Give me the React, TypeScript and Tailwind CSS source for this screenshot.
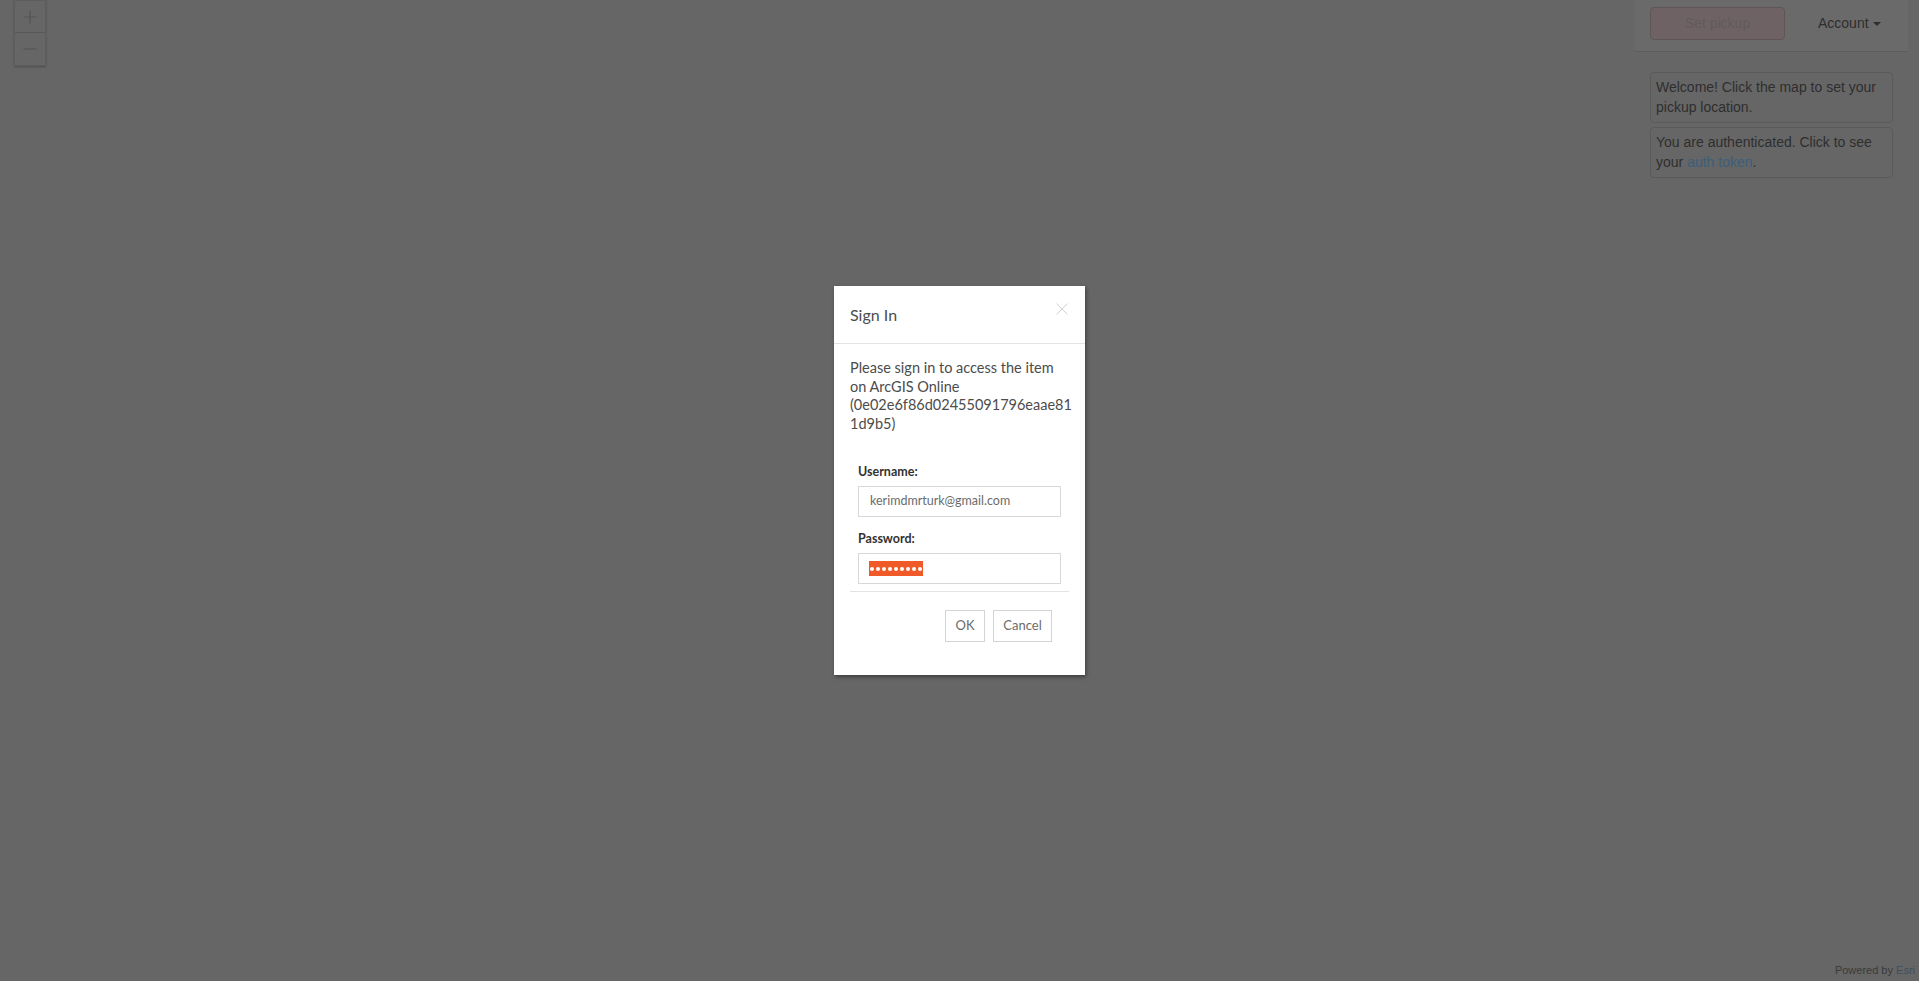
import React from "react";

function ZoomControls() {
  return (
    <div className="absolute left-[14px] top-0 flex w-[32px] flex-col border border-[#5d5d5d] bg-[#666666] shadow-[0_1px_2px_rgba(0,0,0,0.25)]">
      <div className="flex h-[32px] items-center justify-center border-b border-[#595959]">
        <svg width="14" height="14" viewBox="0 0 14 14">
          <path d="M7 0.5v13M0.5 7h13" stroke="#545454" strokeWidth="1.2" />
        </svg>
      </div>
      <div className="flex h-[32px] items-center justify-center">
        <svg width="14" height="14" viewBox="0 0 14 14">
          <path d="M0.5 7h13" stroke="#545454" strokeWidth="1.2" />
        </svg>
      </div>
    </div>
  );
}

function TopPanel() {
  return (
    <div className="absolute right-[11px] top-0 w-[273px] font-['Liberation_Sans',Arial,sans-serif] text-[14px]">
      <div className="flex h-[52px] items-start border-b border-[#5d5d5d] bg-[#6a6a6a] pl-[15px] pt-[7px]">
        <div className="flex h-[33px] w-[135px] items-center justify-center rounded-[4px] border border-[#5e5657] bg-[#6e6264] text-[#625b5c]">
          Set pickup
        </div>
        <div className="ml-[33px] flex h-[33px] items-center text-[#2e2e2e]">
          Account
          <svg className="ml-[4px]" width="8" height="4" viewBox="0 0 8 4">
            <path d="M0 0h8L4 4z" fill="#2e2e2e" />
          </svg>
        </div>
      </div>
      <div className="flex flex-col gap-[4px] px-[15px] pt-[20px] leading-[20px] text-[#2e2e2e]">
        <p className="rounded-[4px] border border-[#5a5a5a] px-[5px] pb-[5px] pt-[4px]">
          Welcome! Click the map to set your pickup location.
        </p>
        <p className="rounded-[4px] border border-[#5a5a5a] px-[5px] pb-[5px] pt-[4px]">
          You are authenticated. Click to see your <a className="text-[#3b5e7c]">auth token</a>.
        </p>
      </div>
    </div>
  );
}

function SignInDialog() {
  return (
    <div className="absolute inset-0 flex items-center justify-center pb-[20px]">
      <div className="w-[251px] bg-white font-['Lato','Open_Sans',sans-serif] shadow-[1px_2px_4px_rgba(0,0,0,0.4)]">
        <div className="relative flex h-[58px] items-center border-b border-[#e3e3e3] px-[16px]">
          <span className="text-[16px] text-[#4c4c4c]">Sign In</span>
          <svg className="absolute right-[17px] top-[17px]" width="12" height="12" viewBox="0 0 12 12">
            <path d="M0.5 0.5l11 11M11.5 0.5l-11 11" stroke="#d0d0d0" strokeWidth="1" />
          </svg>
        </div>
        <div className="px-[16px] pb-[33px] pt-[15px]">
          <div className="text-[14.5px] leading-[18.5px] text-[#4c4c4c]">
            <div className="whitespace-nowrap">Please sign in to access the item</div>
            <div className="whitespace-nowrap">on ArcGIS Online</div>
            <div className="whitespace-nowrap">(0e02e6f86d02455091796eaae81</div>
            <div className="whitespace-nowrap">1d9b5)</div>
          </div>
          <div className="mt-[31px] px-[8px]">
            <div className="text-[12.5px] font-bold leading-[16px] text-[#323232]">Username:</div>
            <div className="mt-[6px] flex h-[31px] items-center border border-[#d8d8d8] pl-[11px] text-[12.5px] text-[#6b6b6b]">
              kerimdmrturk@gmail.com
            </div>
            <div className="mt-[14px] text-[12.5px] font-bold leading-[16px] text-[#323232]">Password:</div>
            <div className="mt-[6px] flex h-[31px] items-center border border-[#d8d8d8] pl-[10px]">
              <span className="flex h-[15px] w-[54px] items-center justify-center gap-[2px] bg-[#f05a28]">
                {Array.from({ length: 9 }).map((_, i) => (
                  <span key={i} className="h-[4px] w-[4px] rounded-full bg-white" />
                ))}
              </span>
            </div>
          </div>
          <div className="mt-[7px] border-t border-[#e3e3e3]" />
          <div className="mt-[18px] flex justify-end gap-[8px] pr-[17px]">
            <div className="flex h-[32px] w-[40px] items-center justify-center border border-[#d4d4d4] text-[13px] text-[#6b6b6b]">
              OK
            </div>
            <div className="flex h-[32px] w-[59px] items-center justify-center border border-[#d4d4d4] text-[13px] text-[#6b6b6b]">
              Cancel
            </div>
          </div>
        </div>
      </div>
    </div>
  );
}

export default function App() {
  return (
    <div className="relative h-[981px] w-full overflow-hidden bg-[#666666]">
      <ZoomControls />
      <TopPanel />
      <SignInDialog />
      <div className="absolute bottom-[3px] right-[4px] font-['Liberation_Sans',Arial,sans-serif] text-[11px] text-[#3a3a3a]">
        Powered by <span className="text-[#3d4f5e]">Esri</span>
      </div>
    </div>
  );
}
